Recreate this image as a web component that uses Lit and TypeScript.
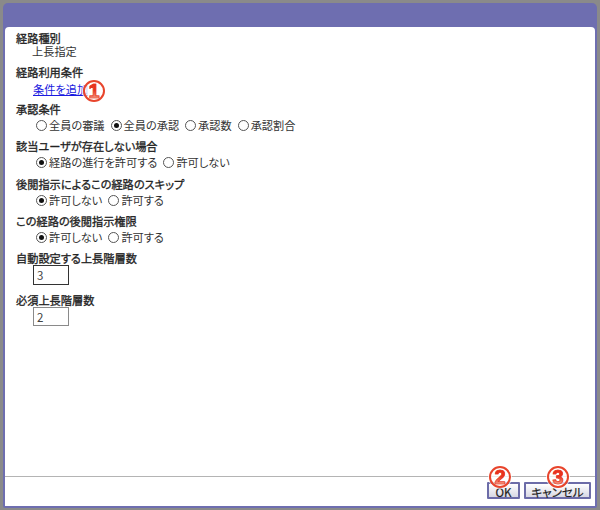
import { LitElement, html, css } from "lit";
import { customElement } from "lit/decorators.js";

@customElement("app-root")
export class AppRoot extends LitElement {
  static styles = css`
    :host { display: block; width: 600px; height: 510px; background: #8a8a8a; box-sizing: border-box; padding: 3px 3px 2px 3px; font-family: "Noto Sans CJK JP", "Liberation Sans", sans-serif; font-size: 11.2px; font-feature-settings: "palt"; color: #222; overflow: hidden; }
    .frame { height: 100%; box-sizing: border-box; background: #6e6eb0; border-radius: 5px 5px 2px 2px; padding: 24px 2px 2px 2px; }
    .panel { position: relative; height: 100%; box-sizing: border-box; background: #fff; border-radius: 4px 4px 0 0; display: flex; flex-direction: column; }
    .content { flex: 1; padding: 4px 0 0 11px; display: flex; flex-direction: column; }
    .sec { height: 37px; flex: none; }
    .sec.h34 { height: 34px; }
    .sec.h38 { height: 38px; }
    .sec.h42 { height: 42px; }
    .label { line-height: 15px; height: 15px; white-space: nowrap; -webkit-text-stroke: 0.3px #222; }
    .label.tight { line-height: 13px; height: 13px; margin-top: 1px; }
    .val { padding-left: 16px; line-height: 13px; white-space: nowrap; color: #333; }
    .rows { padding-left: 20px; display: flex; align-items: center; height: 16px; white-space: nowrap; color: #333; }
    .opt { display: inline-flex; align-items: center; margin-right: 6px; }
    .radio { width: 11px; height: 11px; box-sizing: border-box; border: 1px solid #555; border-radius: 50%; background: #fff; margin-right: 2px; display: inline-flex; align-items: center; justify-content: center; flex: none; }
    .radio.on::after { content: ""; width: 5px; height: 5px; border-radius: 50%; background: #111; }
    a { color: #1a1ae0; text-decoration: underline; margin-left: 17px; }
    .link { margin-top: 1px; line-height: 16px; height: 16px; }
    input { display: block; margin: -1px 0 0 17px; width: 36px; height: 20px; box-sizing: border-box; border: 1px solid #333; padding: 0 3px; font: inherit; font-size: 11.5px; color: #444; outline: none; background: #fff; }
    input.light { border-color: #8a8a8a; height: 19px; }
    .footer { flex: none; height: 30px; border-top: 1px solid #b4b4b4; display: flex; justify-content: flex-end; align-items: flex-start; gap: 4px; padding: 5px 4px 0 0; box-sizing: border-box; }
    button { height: 17px; padding: 0; box-sizing: border-box; font: inherit; font-size: 11.5px; color: #222; border: 2px solid #6c6ca8; background: linear-gradient(#fff, #d8d8e4); border-radius: 1px; -webkit-text-stroke: 0.2px #222; }
    .ok { width: 33px; }
    .cancel { width: 67px; }
    .mark { position: absolute; width: 22px; height: 22px; box-sizing: border-box; border: 2px solid #e8452c; border-radius: 50%; background: rgba(255,255,255,0.75); box-shadow: 0 0 0 1px rgba(255,255,255,0.7); text-align: center; }
    .digit { display: block; font: 900 20px/18px "Liberation Sans", sans-serif; -webkit-text-stroke: 0.6px #e8321c; background: linear-gradient(#e8321c 45%, #f6b09a); -webkit-background-clip: text; background-clip: text; color: transparent; }
    .m1 { left: 78px; top: 53px; }
    .m2 { left: 484px; top: 439px; }
    .m3 { left: 542px; top: 439px; }
  `;

  private radios(items: [string, boolean][]) {
    return html`<div class="rows">${items.map(([t, on]) => html`<span class="opt"><span class="radio ${on ? "on" : ""}"></span>${t}</span>`)}</div>`;
  }

  render() {
    return html`<div class="frame"><div class="panel">
      <div class="content">
        <div class="sec h34"><div class="label tight">経路種別</div><div class="val">上長指定</div></div>
        <div class="sec"><div class="label">経路利用条件</div><div class="link"><a href="#">条件を追加</a></div></div>
        <div class="sec"><div class="label">承認条件</div>${this.radios([["全員の審議", false], ["全員の承認", true], ["承認数", false], ["承認割合", false]])}</div>
        <div class="sec h38"><div class="label">該当ユーザが存在しない場合</div>${this.radios([["経路の進行を許可する", true], ["許可しない", false]])}</div>
        <div class="sec"><div class="label">後閲指示によるこの経路のスキップ</div>${this.radios([["許可しない", true], ["許可する", false]])}</div>
        <div class="sec"><div class="label">この経路の後閲指示権限</div>${this.radios([["許可しない", true], ["許可する", false]])}</div>
        <div class="sec h42"><div class="label">自動設定する上長階層数</div><input value="3" /></div>
        <div class="sec h42"><div class="label">必須上長階層数</div><input class="light" value="2" /></div>
      </div>
      <div class="footer"><button class="ok">OK</button><button class="cancel">キャンセル</button></div>
      <span class="mark m1"><span class="digit">1</span></span><span class="mark m2"><span class="digit">2</span></span><span class="mark m3"><span class="digit">3</span></span>
    </div></div>`;
  }
}
